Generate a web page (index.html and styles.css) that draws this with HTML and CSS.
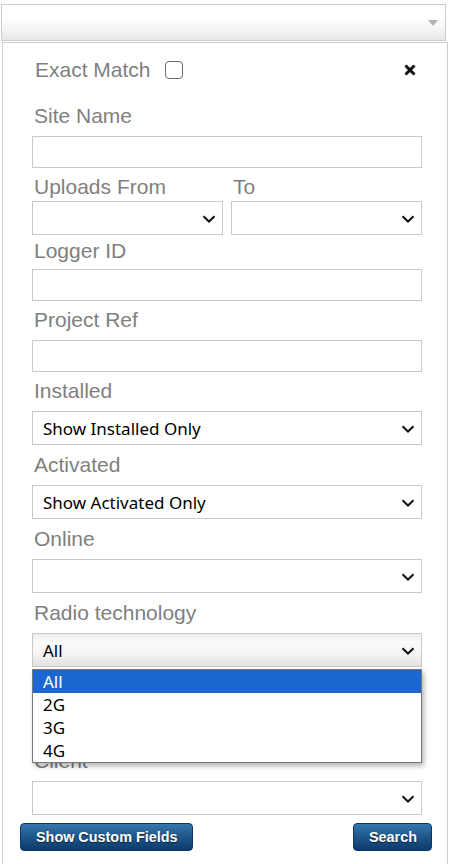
FILE: index.html
```html
<!DOCTYPE html>
<html lang="en">
<head>
    <meta charset="UTF-8">
    <meta name="viewport" content="width=device-width, initial-scale=1.0">
    <title>Site Search</title>
    <link rel="stylesheet" href="styles.css">
</head>
<body>
    <div class="top-select">
        <span class="top-arrow"></span>
    </div>

    <div class="filter-panel">
        <div class="panel-header">
            <label class="exact-match">Exact Match <input type="checkbox" class="check"></label>
            <span class="close-btn">
                <svg width="12" height="12" viewBox="0 0 12 12"><path d="M1.5 1.5 L10.5 10.5 M10.5 1.5 L1.5 10.5" stroke="#111" stroke-width="3"/></svg>
            </span>
        </div>

        <div class="field">
            <label class="field-label">Site Name</label>
            <input type="text" class="text-box">
        </div>

        <div class="field-row">
            <div class="field compact">
                <label class="field-label">Uploads From</label>
                <div class="select-box">
                    <span class="select-value"></span>
                    <svg class="chevron" width="14" height="8" viewBox="0 0 14 8"><path d="M1.5 1.2 L7 6.5 L12.5 1.2" fill="none" stroke="#111" stroke-width="2"/></svg>
                </div>
            </div>
            <div class="field compact">
                <label class="field-label">To</label>
                <div class="select-box">
                    <span class="select-value"></span>
                    <svg class="chevron" width="14" height="8" viewBox="0 0 14 8"><path d="M1.5 1.2 L7 6.5 L12.5 1.2" fill="none" stroke="#111" stroke-width="2"/></svg>
                </div>
            </div>
        </div>

        <div class="field logger">
            <label class="field-label">Logger ID</label>
            <input type="text" class="text-box">
        </div>

        <div class="field project">
            <label class="field-label">Project Ref</label>
            <input type="text" class="text-box">
        </div>

        <div class="field">
            <label class="field-label">Installed</label>
            <div class="select-box">
                <span class="select-value">Show Installed Only</span>
                <svg class="chevron" width="14" height="8" viewBox="0 0 14 8"><path d="M1.5 1.2 L7 6.5 L12.5 1.2" fill="none" stroke="#111" stroke-width="2"/></svg>
            </div>
        </div>

        <div class="field">
            <label class="field-label">Activated</label>
            <div class="select-box">
                <span class="select-value">Show Activated Only</span>
                <svg class="chevron" width="14" height="8" viewBox="0 0 14 8"><path d="M1.5 1.2 L7 6.5 L12.5 1.2" fill="none" stroke="#111" stroke-width="2"/></svg>
            </div>
        </div>

        <div class="field">
            <label class="field-label">Online</label>
            <div class="select-box">
                <span class="select-value"></span>
                <svg class="chevron" width="14" height="8" viewBox="0 0 14 8"><path d="M1.5 1.2 L7 6.5 L12.5 1.2" fill="none" stroke="#111" stroke-width="2"/></svg>
            </div>
        </div>

        <div class="field radio-field">
            <label class="field-label">Radio technology</label>
            <div class="select-box open">
                <span class="select-value">All</span>
                <svg class="chevron" width="14" height="8" viewBox="0 0 14 8"><path d="M1.5 1.2 L7 6.5 L12.5 1.2" fill="none" stroke="#111" stroke-width="2"/></svg>
            </div>
            <!-- opened list of the select -->
            <ul class="drop-list">
                <li class="selected">All</li>
                <li>2G</li>
                <li>3G</li>
                <li>4G</li>
            </ul>
        </div>

        <!-- covered by the open list -->
        <div class="field hidden-field">
            <label class="field-label">Network</label>
            <div class="select-box">
                <span class="select-value"></span>
            </div>
        </div>

        <div class="field">
            <label class="field-label">Client</label>
            <div class="select-box">
                <span class="select-value"></span>
                <svg class="chevron" width="14" height="8" viewBox="0 0 14 8"><path d="M1.5 1.2 L7 6.5 L12.5 1.2" fill="none" stroke="#111" stroke-width="2"/></svg>
            </div>
        </div>

        <div class="button-row">
            <button type="button" class="blue-button">Show Custom Fields</button>
            <button type="button" class="blue-button">Search</button>
        </div>
    </div>
</body>
</html>
```

FILE: styles.css
```css
body {
    margin: 0;
    background-color: #fff;
    font-family: "Liberation Sans", Arial, sans-serif;
}

.top-select {
    box-sizing: border-box;
    height: 37px;
    margin: 4px 4px 0 1px;
    border: 1px solid #cdcdcd;
    background: linear-gradient(#fff 35%, #f4f4f4 70%, #e6e6e6);
    display: flex;
    align-items: center;
    justify-content: flex-end;
    padding-right: 7px;
}

.top-arrow {
    width: 0;
    height: 0;
    border-left: 5px solid transparent;
    border-right: 5px solid transparent;
    border-top: 6px solid #b3b3b3;
    margin-top: 1px;
}

.filter-panel {
    margin: 1px 2px 0 2px;
    min-height: 820px;
    border: 1px solid #cfcfcf;
    border-bottom: none;
    padding: 15px 25px 0 29px;
}

.panel-header {
    display: flex;
    align-items: center;
    justify-content: space-between;
    height: 24px;
    margin-bottom: 22px;
}

.exact-match {
    font-size: 21px;
    line-height: 24px;
    color: #7f7f7f;
    padding-left: 3px;
    display: flex;
    align-items: center;
}

.check {
    appearance: none;
    box-sizing: border-box;
    width: 18px;
    height: 18px;
    margin: 0 0 0 14px;
    border: 1.5px solid #6a6a6a;
    border-radius: 4px;
    background: #fff;
}

.close-btn {
    display: flex;
    margin-right: 6px;
}

.field {
    margin-bottom: 8px;
}

.field-label {
    display: block;
    font-size: 21px;
    line-height: 24px;
    color: #7f7f7f;
    padding-left: 2px;
    margin-bottom: 8px;
    white-space: nowrap;
}

.field.compact .field-label {
    margin-bottom: 2px;
}

.field-row {
    display: grid;
    grid-template-columns: 1fr 1fr;
    gap: 8px;
    margin-top: -1px;
}

.field-row .field {
    margin-bottom: 4px;
}

.field.logger {
    margin-bottom: 7px;
}

.field.logger .field-label {
    margin-bottom: 6px;
}

.field.project {
    margin-bottom: 7px;
}

.hidden-field .field-label {
    visibility: hidden;
}

.text-box {
    display: block;
    box-sizing: border-box;
    width: 100%;
    height: 32px;
    margin: 0;
    border: 1px solid #c9c9c9;
    background: #fff;
}

.select-box {
    box-sizing: border-box;
    height: 34px;
    border: 1px solid #c9c9c9;
    background: #fff;
    display: flex;
    align-items: center;
    justify-content: space-between;
    padding: 0 6px 0 10px;
    font-family: "Noto Sans", "Open Sans", sans-serif;
    font-size: 17px;
    color: #000;
}

.select-box.open {
    background: linear-gradient(#ececec, #fbfbfb 25%, #f5f5f5 60%, #e1e1e1);
}

.chevron {
    display: block;
    margin-top: 1px;
}

.radio-field {
    position: relative;
}

/* open list, drawn over the next fields */
.drop-list {
    position: absolute;
    top: 68px;
    left: 0;
    width: 390px;
    box-sizing: border-box;
    margin: 0;
    padding: 0;
    list-style: none;
    background: #fff;
    border: 1px solid #777;
    box-shadow: 2px 3px 5px rgba(0, 0, 0, 0.3);
    font-family: "Noto Sans", "Open Sans", sans-serif;
    font-size: 17px;
    color: #000;
    z-index: 5;
}

.drop-list li {
    height: 23px;
    line-height: 23px;
    padding-left: 10px;
}

.drop-list li.selected {
    background-color: #1a67d2;
    color: #fff;
}

.button-row {
    display: flex;
    justify-content: space-between;
    margin: 6px -10px 0 -12px;
}

.blue-button {
    height: 28px;
    padding: 0 14px 0 15px;
    border: 1px solid #0b3563;
    border-radius: 4px;
    background: linear-gradient(#3677ad, #1d5689 50%, #0d3b6b);
    color: #fff;
    font-family: "Liberation Sans", Arial, sans-serif;
    font-size: 14.4px;
    font-weight: bold;
    text-shadow: 0 1px 1px rgba(0, 0, 0, 0.6);
    cursor: pointer;
}

.blue-button:hover {
    background: linear-gradient(#3f82ba, #225f95 50%, #0f4275);
}
```
